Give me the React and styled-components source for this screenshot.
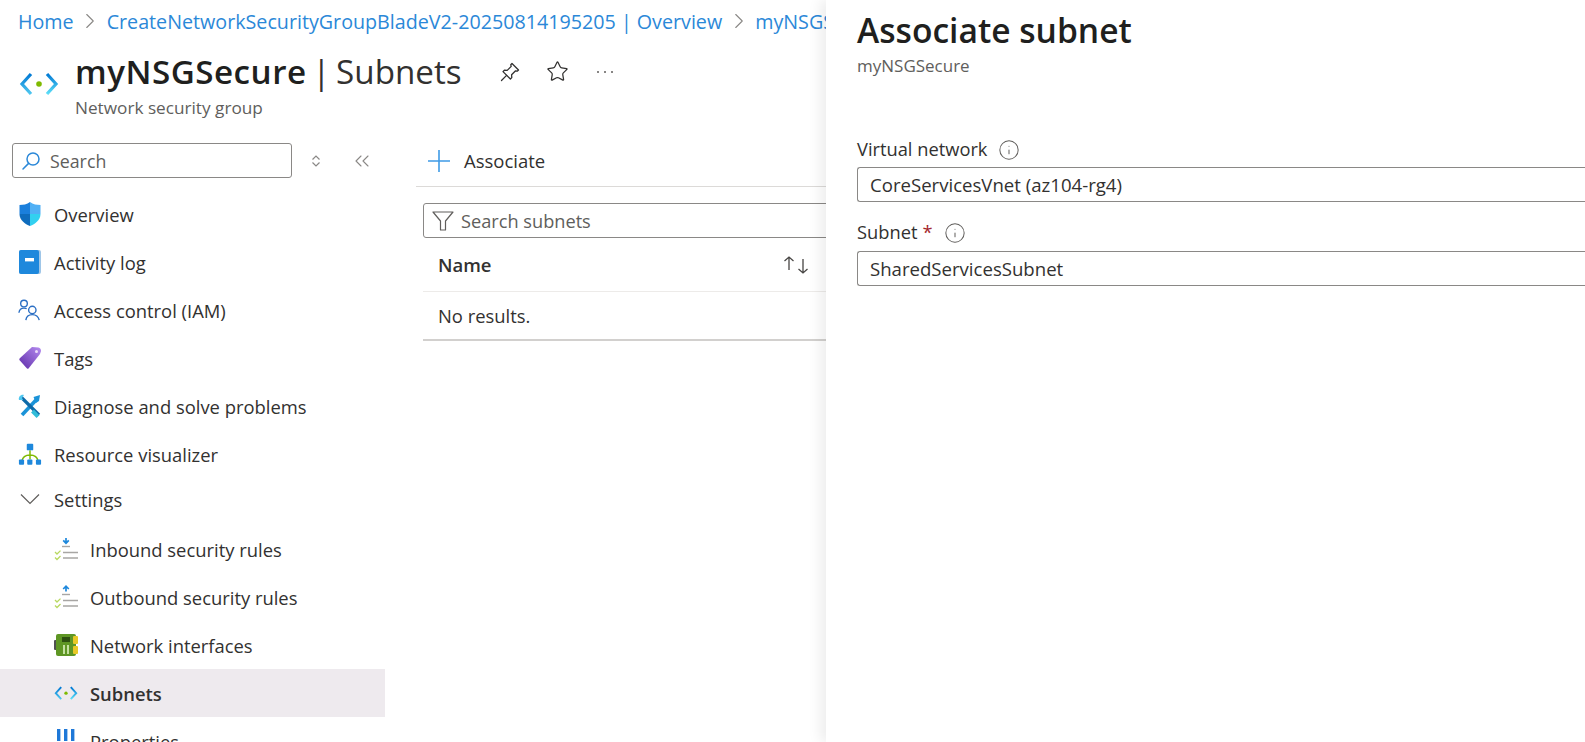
import React from 'react';
import styled, { createGlobalStyle } from 'styled-components';
import { ChevronRight, ChevronsLeft, Star, Info } from 'lucide-react';

const Global = createGlobalStyle`
  html, body { margin: 0; padding: 0; background: #fff; }
  body { font-family: "Open Sans", "Noto Sans", "Liberation Sans", sans-serif; color: #323130; overflow: hidden; }
`;

const Page = styled.div`display: flex; width: 1585px; height: 742px; overflow: hidden; background: #fff;`;
const Main = styled.div`width: 826px; flex: none; display: flex; flex-direction: column; overflow: hidden;`;

const Breadcrumb = styled.nav`height: 42px; flex: none; display: flex; align-items: center; padding-left: 18px; gap: 3.5px; white-space: nowrap; font-size: 19.7px;`;
const Crumb = styled.span`color: #2b88d8;`;
const CrumbSep = styled(ChevronRight)`color: #8a8886; flex: none;`;

const Header = styled.header`height: 101px; flex: none; display: flex; padding-left: 19px;`;
const HeaderIcon = styled.div`width: 56px; flex: none; padding-top: 30px;`;
const HeaderText = styled.div`display: flex; flex-direction: column;`;
const TitleRow = styled.div`height: 59px; display: flex; align-items: center; white-space: nowrap;`;
const Title = styled.h1`margin: 0; font-size: 33.2px; font-weight: 400; color: #323130; word-spacing: -3px;`;
const TitleStrong = styled.strong`font-weight: 600; color: #201f1e; letter-spacing: 0.5px;`;
const TitleActions = styled.div`display: flex; align-items: center; gap: 24px; margin-left: 36px; color: #323130;`;
const TitleSub = styled.div`font-size: 17.2px; color: #605e5c; margin-top: -5px;`;

const Body = styled.div`flex: 1; min-height: 0; display: flex;`;
const Sidebar = styled.aside`width: 385px; flex: none; display: flex; flex-direction: column;`;
const SideTools = styled.div`display: flex; align-items: flex-start; height: 47px; box-sizing: border-box; flex: none; padding-left: 12px;`;
const SideSearch = styled.div`width: 280px; height: 35px; box-sizing: border-box; border: 1px solid #8a8886; border-radius: 3px; display: flex; align-items: center; gap: 9px; padding-left: 8px; font-size: 17.8px; color: #605e5c;`;
const SideToolIcon = styled.span`display: flex; justify-content: center; align-items: center; height: 35px; width: 24px; color: #8a8886; margin-left: ${p => p.$gap}px;`;

const NavRow = styled.div`
  display: flex; align-items: center; flex: none; white-space: nowrap;
  height: ${p => p.$header ? 42 : 48}px;
  margin-bottom: ${p => p.$header ? 5 : 0}px;
  padding-left: ${p => p.$sub ? 54 : 18}px;
  gap: 12px;
  font-size: 18.4px; color: #323130;
  font-weight: ${p => p.$active ? 600 : 400};
  background: ${p => p.$active ? '#eeeaee' : 'transparent'};
`;
const NavIcon = styled.span`width: 24px; height: 24px; flex: none; display: flex; align-items: center; justify-content: center;`;

const Content = styled.section`flex: 1; min-width: 0; display: flex; flex-direction: column; margin-left: 31px;`;
const Toolbar = styled.div`height: 43px; flex: none; border-bottom: 1px solid #dcdad8; display: flex; align-items: flex-start; padding-left: 11px; font-size: 18.5px; color: #323130;`;
const ToolbarInner = styled.div`display: flex; align-items: center; gap: 13px; height: 35px;`;
const ListArea = styled.div`margin-left: 7px; display: flex; flex-direction: column;`;
const FilterBox = styled.div`margin-top: 16px; height: 35px; box-sizing: border-box; width: 500px; border: 1px solid #8a8886; border-radius: 3px; display: flex; align-items: center; gap: 7px; padding-left: 8px; font-size: 18.2px; color: #605e5c;`;
const TableHead = styled.div`height: 54px; box-sizing: border-box; border-bottom: 1px solid #edebe9; display: flex; align-items: center; justify-content: space-between; padding: 0 16px 0 15px; font-size: 18.5px; font-weight: 600; color: #323130;`;
const TableEmpty = styled.div`height: 49px; box-sizing: border-box; border-bottom: 2px solid #d2d0ce; display: flex; align-items: center; padding-left: 15px; font-size: 18.4px; color: #323130;`;

const Panel = styled.aside`position: relative; flex: 1; min-width: 0; padding-left: 31px; background: #fff; box-shadow: -6px 0 12px rgba(0,0,0,.07); display: flex; flex-direction: column;`;
const PanelTitle = styled.h2`margin: 8px 0 0; font-size: 33.6px; line-height: 44px; font-weight: 600; color: #201f1e; white-space: nowrap;`;
const PanelSub = styled.div`font-size: 17px; line-height: 22px; color: #605e5c; margin-top: 3px;`;
const Field = styled.div`display: flex; flex-direction: column; margin-top: ${p => p.$top}px;`;
const FieldLabel = styled.label`height: 36px; box-sizing: border-box; padding-bottom: ${p => p.$lift}px; display: flex; align-items: center; font-size: 18.3px; color: #323130; white-space: nowrap;`;
const Required = styled.span`color: #a4262c; margin-left: 5px;`;
const FieldInfo = styled(Info)`color: #605e5c; margin: 4px 0 0 11px; flex: none;`;
const FieldBox = styled.div`height: 35px; box-sizing: border-box; border: 1px solid #8a8886; border-right: none; border-radius: 3px 0 0 3px; display: flex; align-items: center; padding-left: 12px; font-size: 18.6px; color: #323130; white-space: nowrap;`;

const SubnetIcon = ({ size = 40 }) => (
  <svg width={size} height={size * 0.6} viewBox="0 0 40 24" fill="none">
    <defs>
      <linearGradient id="snetL" x1="0" y1="0" x2="0" y2="1"><stop offset="0" stopColor="#0078d4" /><stop offset="1" stopColor="#50c8f0" /></linearGradient>
      <linearGradient id="snetR" x1="0" y1="0" x2="0" y2="1"><stop offset="0" stopColor="#0078d4" /><stop offset="1" stopColor="#5ee0f8" /></linearGradient>
    </defs>
    <path d="M12 2 L3 12 L12 22" stroke="url(#snetL)" strokeWidth="3.2" />
    <path d="M28 2 L37 12 L28 22" stroke="url(#snetR)" strokeWidth="3.2" />
    <circle cx="20" cy="12" r="2.8" fill="#7fba00" />
  </svg>
);
const PinIcon = () => (
  <svg width="24" height="24" viewBox="0 0 24 24" fill="none" stroke="#323130" strokeWidth="1.3" strokeLinejoin="round" strokeLinecap="round">
    <path d="M14 3.5 L20.5 10 L19.2 11.2 L17.6 10.8 L13.6 14.8 L13.8 17.6 L12.4 19 L5 11.6 L6.4 10.2 L9.2 10.4 L13.2 6.4 L12.8 4.8 Z" />
    <path d="M8.6 15.4 L3.5 20.5" />
  </svg>
);
const Dots = () => (
  <svg width="24" height="24" viewBox="0 0 24 24" fill="#605e5c"><circle cx="5" cy="12" r="1" /><circle cx="12" cy="12" r="1" /><circle cx="19" cy="12" r="1" /></svg>
);
const PlusGlyph = () => (
  <svg width="24" height="24" viewBox="0 0 24 24" fill="none" stroke="#3f9be6" strokeWidth="1.6"><path d="M12 1 V23 M1 12 H23" /></svg>
);
const FunnelGlyph = () => (
  <svg width="22" height="22" viewBox="0 0 22 22" fill="none" stroke="#605e5c" strokeWidth="1.2" strokeLinejoin="round"><path d="M1 2 H21 L13.5 11 V20 H8.5 V11 Z" /></svg>
);
const SearchGlyph = () => (
  <svg width="20" height="20" viewBox="0 0 20 20" fill="none" stroke="#2b88d8" strokeWidth="1.5" strokeLinecap="round">
    <circle cx="12" cy="8" r="6" /><path d="M7.6 12.4 L2 18" />
  </svg>
);
const UpDown = () => (
  <svg width="12" height="14" viewBox="0 0 12 14" fill="none" stroke="#8a8886" strokeWidth="1.2"><path d="M2.5 5.5 L6 2 L9.5 5.5" /><path d="M2.5 8.5 L6 12 L9.5 8.5" /></svg>
);
const SortGlyph = () => (
  <svg width="28" height="20" viewBox="0 0 28 20" fill="none" stroke="#484644" strokeWidth="1.3"><path d="M7 15 V2 M2.5 6 L7 2 L11.5 6" /><path d="M21 4 V18 M16.5 14 L21 18 L25.5 14" /></svg>
);
const CollapseGlyph = () => (
  <svg width="20" height="12" viewBox="0 0 20 12" fill="none" stroke="#605e5c" strokeWidth="1.2"><path d="M1 1.5 L10 10.5 L19 1.5" /></svg>
);
const Shield = () => (
  <svg width="22" height="24" viewBox="0 0 22 24">
    <path d="M11 0 C14 2.4 18 3 21.5 3 V12 H11Z" fill="#50b0f5" />
    <path d="M11 0 C8 2.4 4 3 .5 3 V12 H11Z" fill="#1b7fdc" />
    <path d="M.5 12 H11 V24 C6 22 .5 18 .5 12Z" fill="#0f6cbd" />
    <path d="M11 12 H21.5 C21.5 18 16 22 11 24Z" fill="#32d0f0" />
  </svg>
);
const Book = () => (
  <svg width="22" height="24" viewBox="0 0 22 24">
    <rect x="0" y="0" width="22" height="24" rx="2" fill="#9fc6e8" />
    <rect x="0" y="0" width="20" height="24" rx="2" fill="#1e88dc" />
    <rect x="6" y="8" width="9" height="3.4" fill="#fff" />
  </svg>
);
const People = () => (
  <svg width="26" height="24" viewBox="0 0 26 24" fill="none" stroke="#2b6fc4" strokeWidth="1.5">
    <circle cx="6.5" cy="5" r="3.6" /><path d="M1 15 C1.5 11 4 10 6.5 10 C7.5 10 8.5 10.2 9.4 10.6" />
    <circle cx="15.5" cy="12" r="4" /><path d="M8.5 23 C9 19 12 17 15.5 17 C19 17 22 19 23 23" />
  </svg>
);
const Tag = () => (
  <svg width="24" height="24" viewBox="0 0 24 24">
    <defs><linearGradient id="tagG" x1="1" y1="0" x2="0" y2="1"><stop offset="0" stopColor="#b58cf0" /><stop offset="1" stopColor="#5e2ca8" /></linearGradient></defs>
    <path d="M14 1 L20.5 1.5 Q23 2 23 5 L22 8 L10.5 22.5 Q10 23 9 22.4 L1.4 14 Q1 13 1.8 12.2 Z" fill="url(#tagG)" />
    <circle cx="18.5" cy="5.5" r="1.5" fill="#eadcf8" />
  </svg>
);
const Tools = () => (
  <svg width="24" height="24" viewBox="0 0 24 24" fill="none">
    <path d="M4 21 L19 5" stroke="#1b93d8" strokeWidth="3.6" />
    <path d="M15.5 3 L22 1 L21 7 L18 9 Z" fill="#1b93d8" />
    <path d="M3 3 L21 21" stroke="#0e6aa8" strokeWidth="3.2" />
    <path d="M1 6 C0 3 3 0 6 1 L4 4 L5 6 L7 6 Z" fill="#50c8f0" />
    <path d="M14.5 17 L20 22.6" stroke="#32bcd8" strokeWidth="4" />
  </svg>
);
const Tree = () => (
  <svg width="26" height="24" viewBox="0 0 26 24" fill="none">
    <path d="M13 8 V18 M4 20 C5 15 9 13 13 13 C17 13 21 15 22 20" stroke="#7fba00" strokeWidth="1.6" />
    <rect x="9.5" y="1" width="7" height="7" rx="1" fill="#1e88dc" />
    <rect x="1" y="18" width="5.6" height="5.6" rx="1" fill="#1e88dc" />
    <rect x="10" y="18" width="5.6" height="5.6" rx="1" fill="#1e88dc" />
    <rect x="19.4" y="18" width="5.6" height="5.6" rx="1" fill="#1e88dc" />
  </svg>
);
const RuleIcon = ({ up }) => (
  <svg width="24" height="24" viewBox="0 0 24 24" fill="none">
    <path d={up ? 'M12 6.5 V1.5 M9.2 4 L12 1.2 L14.8 4' : 'M12 1 V6 M9.2 3.4 L12 6.2 L14.8 3.4'} stroke="#1e88dc" strokeWidth="1.7" />
    <path d="M8 9.5 H16" stroke="#a8a6a4" strokeWidth="1.4" />
    <path d="M9 15.5 H24 M9 21 H24" stroke="#a8a6a4" strokeWidth="1.4" />
    <path d="M1 15 L3 17 L6.5 13.6 M1 20.5 L3 22.5 L6.5 19" stroke="#b8d860" strokeWidth="1.3" />
  </svg>
);
const Nic = () => (
  <svg width="24" height="22" viewBox="0 0 24 22">
    <rect x="0" y="6" width="4" height="10" rx="1" fill="#505050" />
    <rect x="2" y="0" width="20" height="22" rx="2" fill="#5e9624" />
    <rect x="19" y="2" width="5" height="8" rx="1" fill="#e8c828" />
    <rect x="19" y="12" width="5" height="8" rx="1" fill="#e8c828" />
    <rect x="8" y="3" width="8" height="5" fill="#2d5010" />
    <rect x="9" y="11" width="2" height="9" fill="#c4e0a0" /><rect x="13" y="11" width="2" height="9" fill="#c4e0a0" />
  </svg>
);
const Bars = () => (
  <svg width="20" height="24" viewBox="0 0 20 24" fill="#1e78d8">
    <rect x="1" y="0" width="3.4" height="12" /><rect x="8" y="0" width="3.4" height="12" /><rect x="15" y="0" width="3.4" height="12" />
    <rect x="1" y="15" width="3.4" height="3.4" /><rect x="8" y="15" width="3.4" height="3.4" /><rect x="15" y="15" width="3.4" height="3.4" />
  </svg>
);

const topItems = [
  ['Overview', <Shield />], ['Activity log', <Book />], ['Access control (IAM)', <People />],
  ['Tags', <Tag />], ['Diagnose and solve problems', <Tools />], ['Resource visualizer', <Tree />],
];
const subItems = [
  ['Inbound security rules', <RuleIcon />], ['Outbound security rules', <RuleIcon up />],
  ['Network interfaces', <Nic />], ['Subnets', <SubnetIcon size={24} />, true], ['Properties', <Bars />],
];

export default function App() {
  return (
    <Page>
      <Global />
      <Main>
        <Breadcrumb>
          <Crumb>Home</Crumb>
          <CrumbSep size={26} strokeWidth={1} />
          <Crumb>CreateNetworkSecurityGroupBladeV2-20250814195205 | Overview</Crumb>
          <CrumbSep size={26} strokeWidth={1} />
          <Crumb>myNSGSecure</Crumb>
        </Breadcrumb>
        <Header>
          <HeaderIcon><SubnetIcon /></HeaderIcon>
          <HeaderText>
            <TitleRow>
              <Title><TitleStrong>myNSGSecure</TitleStrong> | Subnets</Title>
              <TitleActions>
                <PinIcon />
                <Star size={23} strokeWidth={1.3} />
                <Dots />
              </TitleActions>
            </TitleRow>
            <TitleSub>Network security group</TitleSub>
          </HeaderText>
        </Header>
        <Body>
          <Sidebar>
            <SideTools>
              <SideSearch><SearchGlyph />Search</SideSearch>
              <SideToolIcon $gap={12}><UpDown /></SideToolIcon>
              <SideToolIcon $gap={22}><ChevronsLeft size={24} strokeWidth={1.1} /></SideToolIcon>
            </SideTools>
            {topItems.map(([label, icon]) => (
              <NavRow key={label}><NavIcon>{icon}</NavIcon>{label}</NavRow>
            ))}
            <NavRow $header><NavIcon><CollapseGlyph /></NavIcon>Settings</NavRow>
            {subItems.map(([label, icon, active]) => (
              <NavRow key={label} $sub $active={active}><NavIcon>{icon}</NavIcon>{label}</NavRow>
            ))}
          </Sidebar>
          <Content>
            <Toolbar>
              <ToolbarInner><PlusGlyph />Associate</ToolbarInner>
            </Toolbar>
            <ListArea>
              <FilterBox><FunnelGlyph />Search subnets</FilterBox>
              <TableHead>Name<SortGlyph /></TableHead>
              <TableEmpty>No results.</TableEmpty>
            </ListArea>
          </Content>
        </Body>
      </Main>
      <Panel>
        <PanelTitle>Associate subnet</PanelTitle>
        <PanelSub>myNSGSecure</PanelSub>
        <Field $top={54}>
          <FieldLabel $lift={2}>Virtual network<FieldInfo size={22} strokeWidth={1.1} /></FieldLabel>
          <FieldBox>CoreServicesVnet (az104-rg4)</FieldBox>
        </Field>
        <Field $top={13}>
          <FieldLabel $lift={4}>Subnet<Required>*</Required><FieldInfo size={22} strokeWidth={1.1} /></FieldLabel>
          <FieldBox>SharedServicesSubnet</FieldBox>
        </Field>
      </Panel>
    </Page>
  );
}
